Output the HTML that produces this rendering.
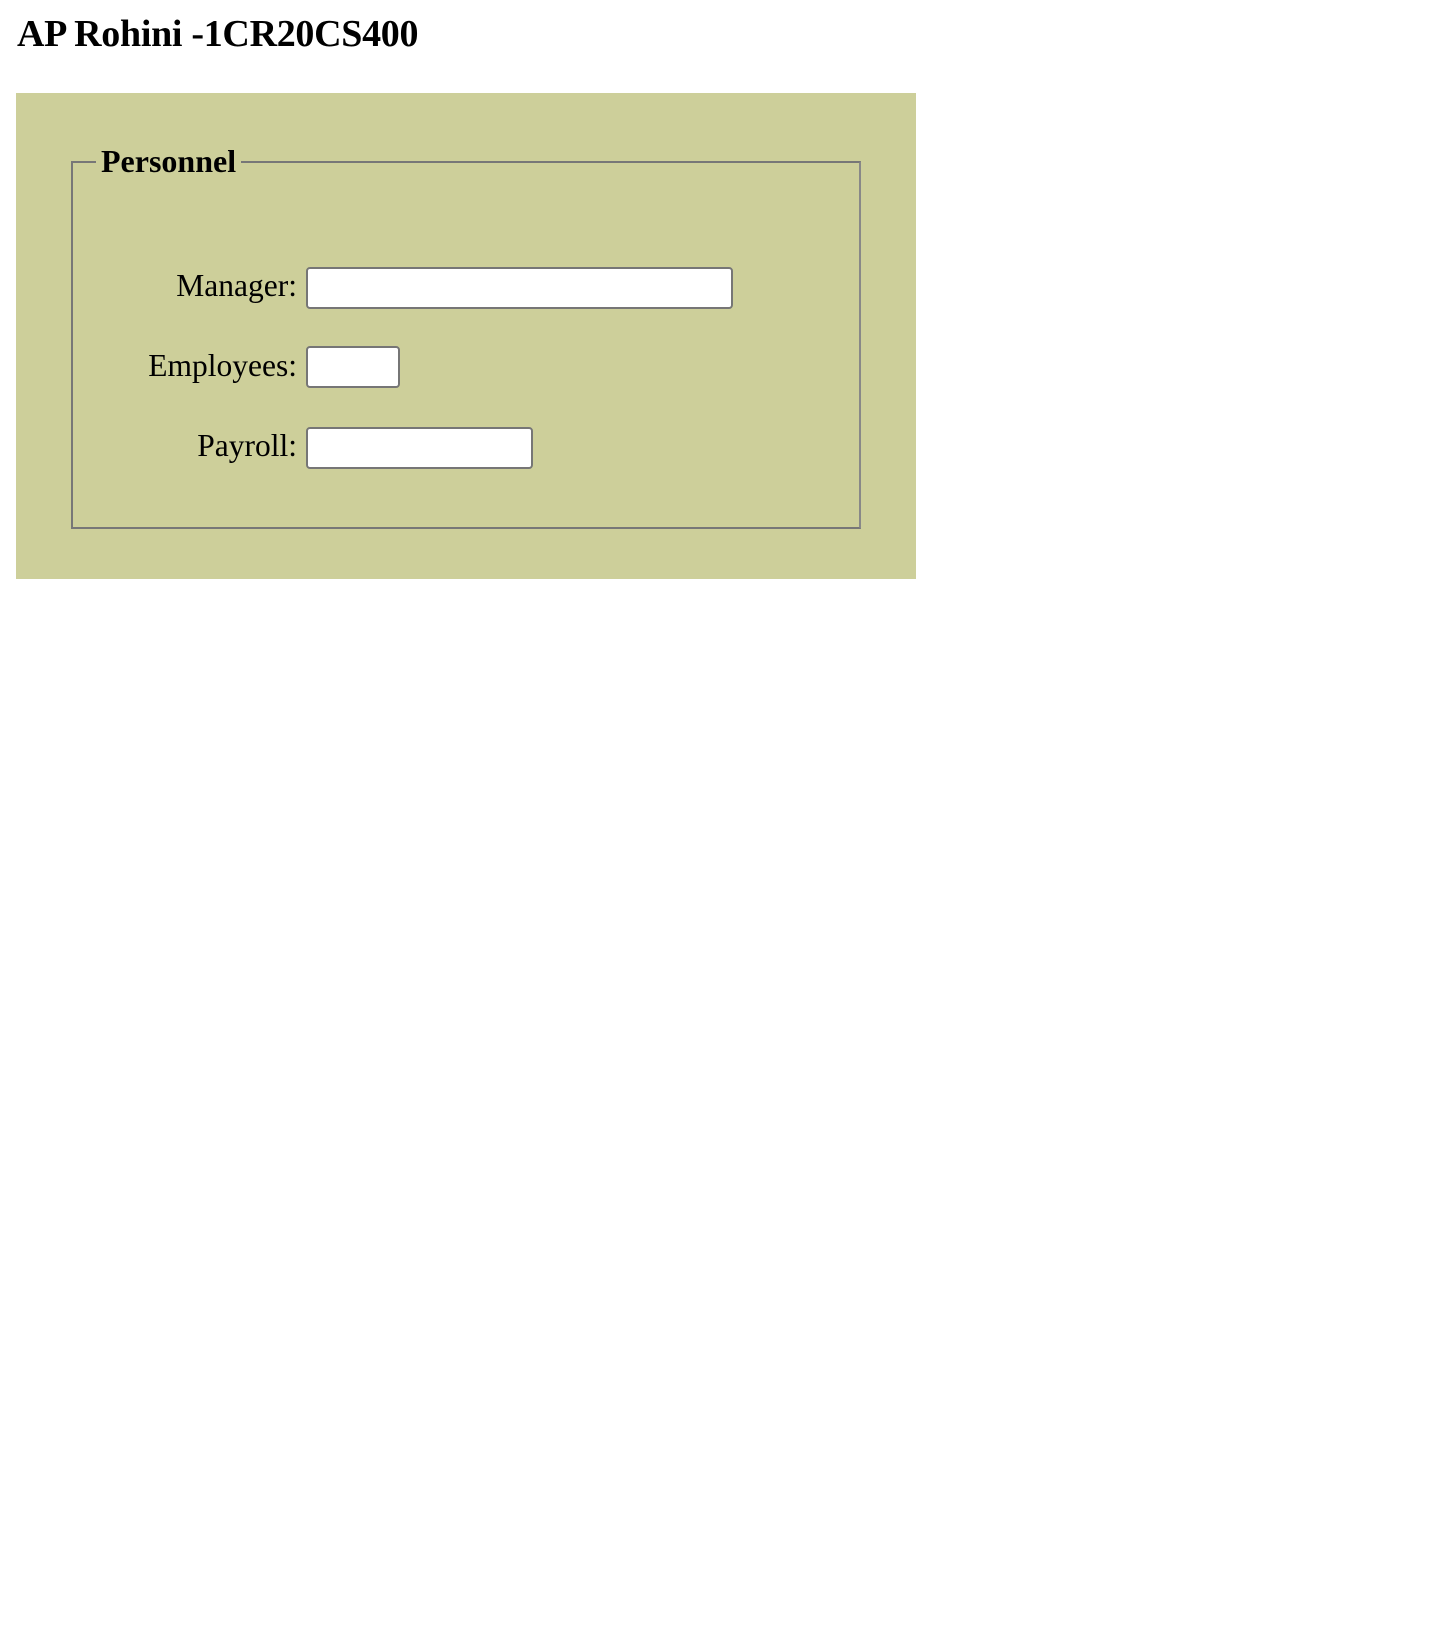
<!DOCTYPE html>
<html><head><meta charset="utf-8"><style>
html,body{margin:0;padding:0;background:#fff;width:1434px;height:1639px;overflow:hidden;}
body{position:relative;font-family:"Liberation Serif",serif;color:#000;}
h1{position:absolute;left:17px;top:10px;margin:0;font-size:38px;font-weight:bold;line-height:48px;white-space:nowrap;letter-spacing:-0.3px;}
.box{position:absolute;left:16px;top:93px;width:900px;height:486px;background:#cdcf9a;}
.fs{position:absolute;left:71px;top:161px;width:786px;height:364px;border:2px solid #777;border-right-color:#888;border-bottom-color:#777;}
.leg{position:absolute;left:96px;top:141px;padding:0 5px;background:#cdcf9a;font-size:32px;font-weight:bold;line-height:40px;white-space:nowrap;}
.lab{position:absolute;font-size:31.5px;line-height:40px;right:1137px;text-align:right;white-space:nowrap;}
.in{position:absolute;left:306px;background:#fff;border:2px solid #767676;border-radius:4px;box-sizing:border-box;}
</style></head><body>
<h1>AP Rohini -1CR20CS400</h1>
<div class="box"></div>
<div class="fs"></div>
<div class="leg">Personnel</div>
<div class="lab" style="top:266px">Manager:</div>
<div class="in" style="top:267px;width:427px;height:42px"></div>
<div class="lab" style="top:346px">Employees:</div>
<div class="in" style="top:346px;width:94px;height:42px"></div>
<div class="lab" style="top:426px">Payroll:</div>
<div class="in" style="top:427px;width:227px;height:42px"></div>
</body></html>
